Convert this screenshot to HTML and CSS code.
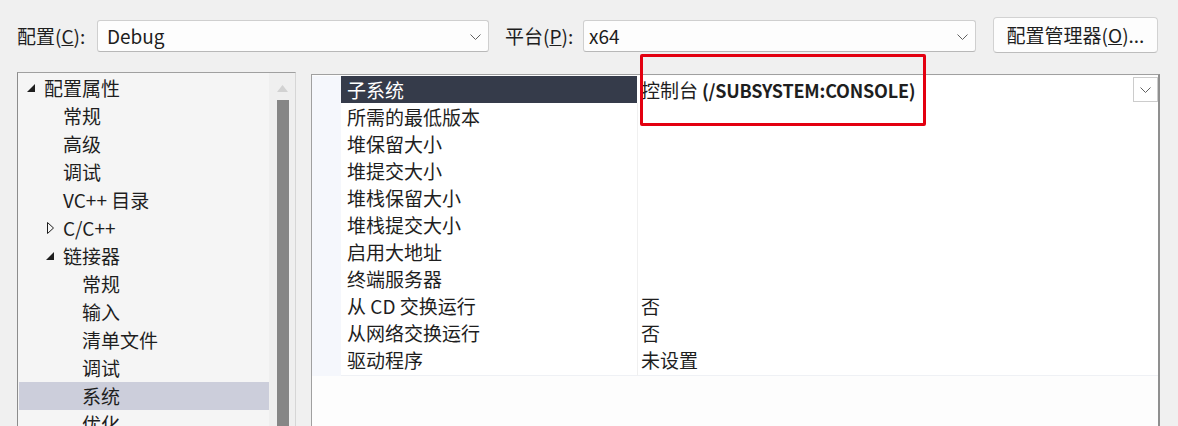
FILE: index.html
```html
<!DOCTYPE html>
<html>
	<head>
		<meta charset="UTF-8">
		<title>属性页</title>
		<link rel="stylesheet" href="styles.css">
	</head>
	<body>
		<div class="page">
			<div class="toolbar">
				<span class="label">配置(<u>C</u>):</span>
				<div class="combo combo-config">
					<span>Debug</span>
					<svg class="chev" width="11" height="6" viewBox="0 0 11 6"><path d="M0.5 0.5 L5.5 5.5 L10.5 0.5" fill="none" stroke="#606060" stroke-width="1"/></svg>
				</div>
				<span class="label label-platform">平台(<u>P</u>):</span>
				<div class="combo combo-platform">
					<span>x64</span>
					<svg class="chev" width="11" height="6" viewBox="0 0 11 6"><path d="M0.5 0.5 L5.5 5.5 L10.5 0.5" fill="none" stroke="#606060" stroke-width="1"/></svg>
				</div>
				<div class="button">配置管理器(<u>O</u>)...</div>
			</div>

			<div class="main">
				<div class="tree">
					<ul class="tree-list">
						<li class="node lv0"><svg class="arrow" width="8" height="8" viewBox="0 0 8 8"><path d="M8 0 L8 8 L0 8 Z" fill="#1e1e1e"/></svg>配置属性</li>
						<li class="node lv1">常规</li>
						<li class="node lv1">高级</li>
						<li class="node lv1">调试</li>
						<li class="node lv1">VC++ 目录</li>
						<li class="node lv1"><svg class="arrow closed" width="8" height="12" viewBox="0 0 8 12"><path d="M0.5 0.5 L6.5 6 L0.5 11.5 Z" fill="none" stroke="#1e1e1e" stroke-width="1"/></svg>C/C++</li>
						<li class="node lv1"><svg class="arrow" width="8" height="8" viewBox="0 0 8 8"><path d="M8 0 L8 8 L0 8 Z" fill="#1e1e1e"/></svg>链接器</li>
						<li class="node lv2">常规</li>
						<li class="node lv2">输入</li>
						<li class="node lv2">清单文件</li>
						<li class="node lv2">调试</li>
						<li class="node lv2 selected">系统</li>
						<li class="node lv2">优化</li>
					</ul>
					<div class="scrollbar">
						<svg class="scroll-up" width="11" height="7" viewBox="0 0 11 7"><path d="M0 7 L5.5 0 L11 7 Z" fill="#d2d2d2"/></svg>
						<div class="thumb"></div>
					</div>
				</div>

				<div class="grid">
					<div class="row active">
						<div class="gutter"></div>
						<div class="name">子系统</div>
						<div class="value"><b><span class="cjk">控制台</span> (/SUBSYSTEM:CONSOLE)</b>
							<div class="drop"><svg width="11" height="6" viewBox="0 0 11 6"><path d="M0.5 0.5 L5.5 5.5 L10.5 0.5" fill="none" stroke="#606060" stroke-width="1"/></svg></div>
						</div>
					</div>
					<div class="row"><div class="gutter"></div><div class="name">所需的最低版本</div><div class="value"></div></div>
					<div class="row"><div class="gutter"></div><div class="name">堆保留大小</div><div class="value"></div></div>
					<div class="row"><div class="gutter"></div><div class="name">堆提交大小</div><div class="value"></div></div>
					<div class="row"><div class="gutter"></div><div class="name">堆栈保留大小</div><div class="value"></div></div>
					<div class="row"><div class="gutter"></div><div class="name">堆栈提交大小</div><div class="value"></div></div>
					<div class="row"><div class="gutter"></div><div class="name">启用大地址</div><div class="value"></div></div>
					<div class="row"><div class="gutter"></div><div class="name">终端服务器</div><div class="value"></div></div>
					<div class="row"><div class="gutter"></div><div class="name">从 CD 交换运行</div><div class="value">否</div></div>
					<div class="row"><div class="gutter"></div><div class="name">从网络交换运行</div><div class="value">否</div></div>
					<div class="row"><div class="gutter"></div><div class="name">驱动程序</div><div class="value">未设置</div></div>
				</div>
			</div>

			<div class="highlight"></div>
		</div>
	</body>
</html>
```
FILE: styles.css
```css
*{
	padding: 0;
	margin: 0;
	box-sizing: border-box;
}
ul{
	list-style: none;
}
body{
	background: #f0f0f0;
	color: #1e1e1e;
	font-family: "Noto Sans CJK SC", "Noto Sans", sans-serif;
	font-size: 19px;
	overflow: hidden;
}
.page{
	position: relative;
	padding: 17px 18px 0 17px;
	height: 426px;
}

/* top bar */
.toolbar{
	display: flex;
	align-items: center;
	height: 36px;
}
.label{
	width: 80px;
	line-height: 24px;
	margin-top: 2px;
}
.label-platform{
	width: 78px;
	margin-left: 16px;
}
.combo{
	position: relative;
	display: flex;
	align-items: center;
	height: 32px;
	margin-top: 1px;
	padding-left: 9px;
	padding-bottom: 1px;
	background: #fdfdfd;
	border: 1px solid #cfcfcf;
	border-bottom-color: #b8b8b8;
	border-radius: 3px;
}
.combo-config{
	width: 392px;
}
.combo-platform{
	width: 393px;
	padding-left: 5px;
}
.combo .chev{
	position: absolute;
	right: 7px;
	top: 13px;
}
.button{
	margin-left: 17px;
	width: 165px;
	height: 36px;
	line-height: 33px;
	text-align: center;
	background: #fdfdfd;
	border: 1px solid #d2d2d2;
	border-bottom-color: #bdbdbd;
	border-radius: 4px;
}

/* panels */
.main{
	display: flex;
	margin-top: 19px;
	height: 360px;
}
.tree{
	display: flex;
	width: 279px;
	background: #f5f5f5;
	border-left: 1px solid #8c8c8c;
	border-top: 1px solid #a0a0a0;
	border-right: 1px solid #d6d6d6;
	overflow: hidden;
}
.tree-list{
	flex: 1;
	padding-top: 1px;
	padding-left: 1px;
}
.node{
	display: flex;
	align-items: center;
	height: 28px;
	padding-bottom: 2px;
	white-space: nowrap;
	position: relative;
}
.node .arrow{
	position: absolute;
}
.lv0{
	padding-left: 25px;
}
.lv0 .arrow{
	left: 8px;
	top: 10px;
}
.lv1{
	padding-left: 44px;
}
.lv1 .arrow{
	left: 27px;
	top: 10px;
}
.lv1 .arrow.closed{
	left: 28px;
	top: 8px;
}
.lv2{
	padding-left: 63px;
}
.node.selected{
	background: #cccedb;
}
.scrollbar{
	width: 26px;
	background: #efefef;
	display: flex;
	flex-direction: column;
	align-items: center;
	padding-top: 12px;
}
.scroll-up{
	margin-left: 1px;
}
.thumb{
	width: 12px;
	flex: 1;
	margin-top: 8px;
	margin-left: 1px;
	background: #868686;
}

/* property grid */
.grid{
	margin-left: 15px;
	margin-top: 2px;
	width: 849px;
	background: #fdfdfd;
	border: 1px solid #a0a0a0;
	border-right: 2px solid #8f8f8f;
	border-bottom: none;
	padding-top: 1px;
}
.row{
	display: grid;
	grid-template-columns: 29px 297px 1fr;
	height: 27px;
}
.gutter{
	background: #f5f7fc;
}
.name, .value{
	display: flex;
	align-items: center;
	border-bottom: 1px solid #eff1f5;
	white-space: nowrap;
	padding-bottom: 2px;
}
.name{
	padding-left: 6px;
	border-right: 1px solid #f0f0f0;
	background: #ffffff;
}
.value{
	position: relative;
	padding-left: 3px;
	background: #ffffff;
}
.row.active .name{
	background: #353b4a;
	color: #ffffff;
	border-bottom-color: #ffffff;
	border-right-color: #ffffff;
}
.value b{
	font-weight: 700;
	font-size: 18px;
	letter-spacing: -0.2px;
}
.value .cjk{
	font-weight: 400;
	font-size: 19px;
	letter-spacing: 0;
}
.drop{
	position: absolute;
	right: 0;
	top: 1px;
	width: 25px;
	height: 25px;
	background: #ffffff;
	border: 1px solid #cccccc;
	display: flex;
	align-items: center;
	justify-content: center;
}

/* annotation */
.highlight{
	position: absolute;
	left: 640px;
	top: 54px;
	width: 286px;
	height: 72px;
	border: 3px solid #e30010;
	border-radius: 2px;
}
```
